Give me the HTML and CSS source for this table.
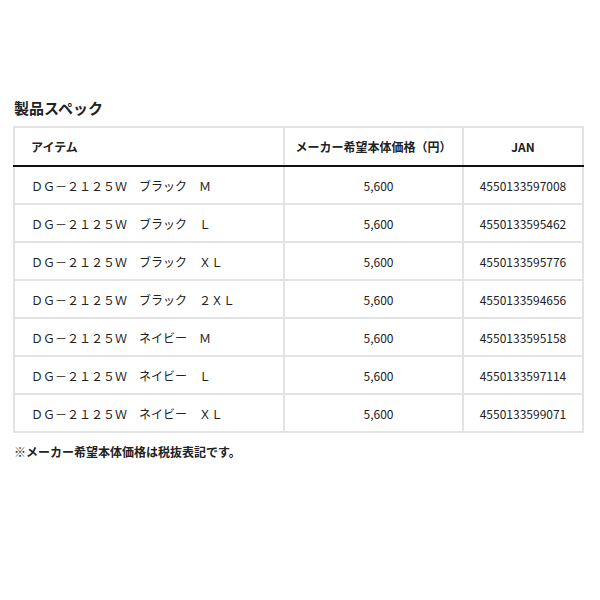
FILE: index.html
```html
<!DOCTYPE html>
<html lang="ja">
<head>
<meta charset="utf-8">
<link rel="stylesheet" href="styles.css">
</head>
<body>
<div class="page">
  <h2 class="title">製品スペック</h2>
  <table class="spec">
    <colgroup><col class="c1"><col class="c2"><col class="c3"></colgroup>
    <thead>
      <tr><th class="left">アイテム</th><th>メーカー希望本体価格（円）</th><th>JAN</th></tr>
    </thead>
    <tbody>
      <tr><td class="item">ＤＧ－２１２５Ｗ　ブラック　Ｍ</td><td class="price">5,600</td><td>4550133597008</td></tr>
      <tr><td class="item">ＤＧ－２１２５Ｗ　ブラック　Ｌ</td><td class="price">5,600</td><td>4550133595462</td></tr>
      <tr><td class="item">ＤＧ－２１２５Ｗ　ブラック　ＸＬ</td><td class="price">5,600</td><td>4550133595776</td></tr>
      <tr><td class="item">ＤＧ－２１２５Ｗ　ブラック　２ＸＬ</td><td class="price">5,600</td><td>4550133594656</td></tr>
      <tr><td class="item">ＤＧ－２１２５Ｗ　ネイビー　Ｍ</td><td class="price">5,600</td><td>4550133595158</td></tr>
      <tr><td class="item">ＤＧ－２１２５Ｗ　ネイビー　Ｌ</td><td class="price">5,600</td><td>4550133597114</td></tr>
      <tr><td class="item">ＤＧ－２１２５Ｗ　ネイビー　ＸＬ</td><td class="price">5,600</td><td>4550133599071</td></tr>
    </tbody>
  </table>
  <p class="note">※メーカー希望本体価格は税抜表記です。</p>
</div>
</body>
</html>
```
FILE: styles.css
```css
html, body {
  margin: 0;
  padding: 0;
  background: #fff;
}
body {
  font-family: "Noto Sans CJK JP", "Noto Sans", sans-serif;
  color: #222;
}
.page {
  padding: 98px 0 0 13px;
}
.title {
  margin: 0 0 8px 1px;
  font-size: 15px;
  line-height: 20px;
  font-weight: 700;
  color: #222;
}
.spec {
  border-collapse: collapse;
  width: 571px;
  table-layout: fixed;
  font-size: 12px;
}
.c1 { width: 270px; }
.c2 { width: 179px; }
.c3 { width: 120px; }
.spec th, .spec td {
  border: 2px solid #e3e3e3;
  text-align: center;
  padding: 0 4px;
  color: #222;
}
.spec th {
  height: 37px;
  font-weight: 700;
  border-bottom: 2px solid #111;
}
.spec td {
  height: 36px;
  font-weight: 400;
}
.spec td.price {
  padding: 0 0 0 10px;
}
.spec th.left, .spec td.item {
  text-align: left;
  padding-left: 16px;
}
.note {
  margin: 11px 0 0 1px;
  font-size: 12px;
  line-height: 16px;
  font-weight: 700;
  color: #222;
}
```
